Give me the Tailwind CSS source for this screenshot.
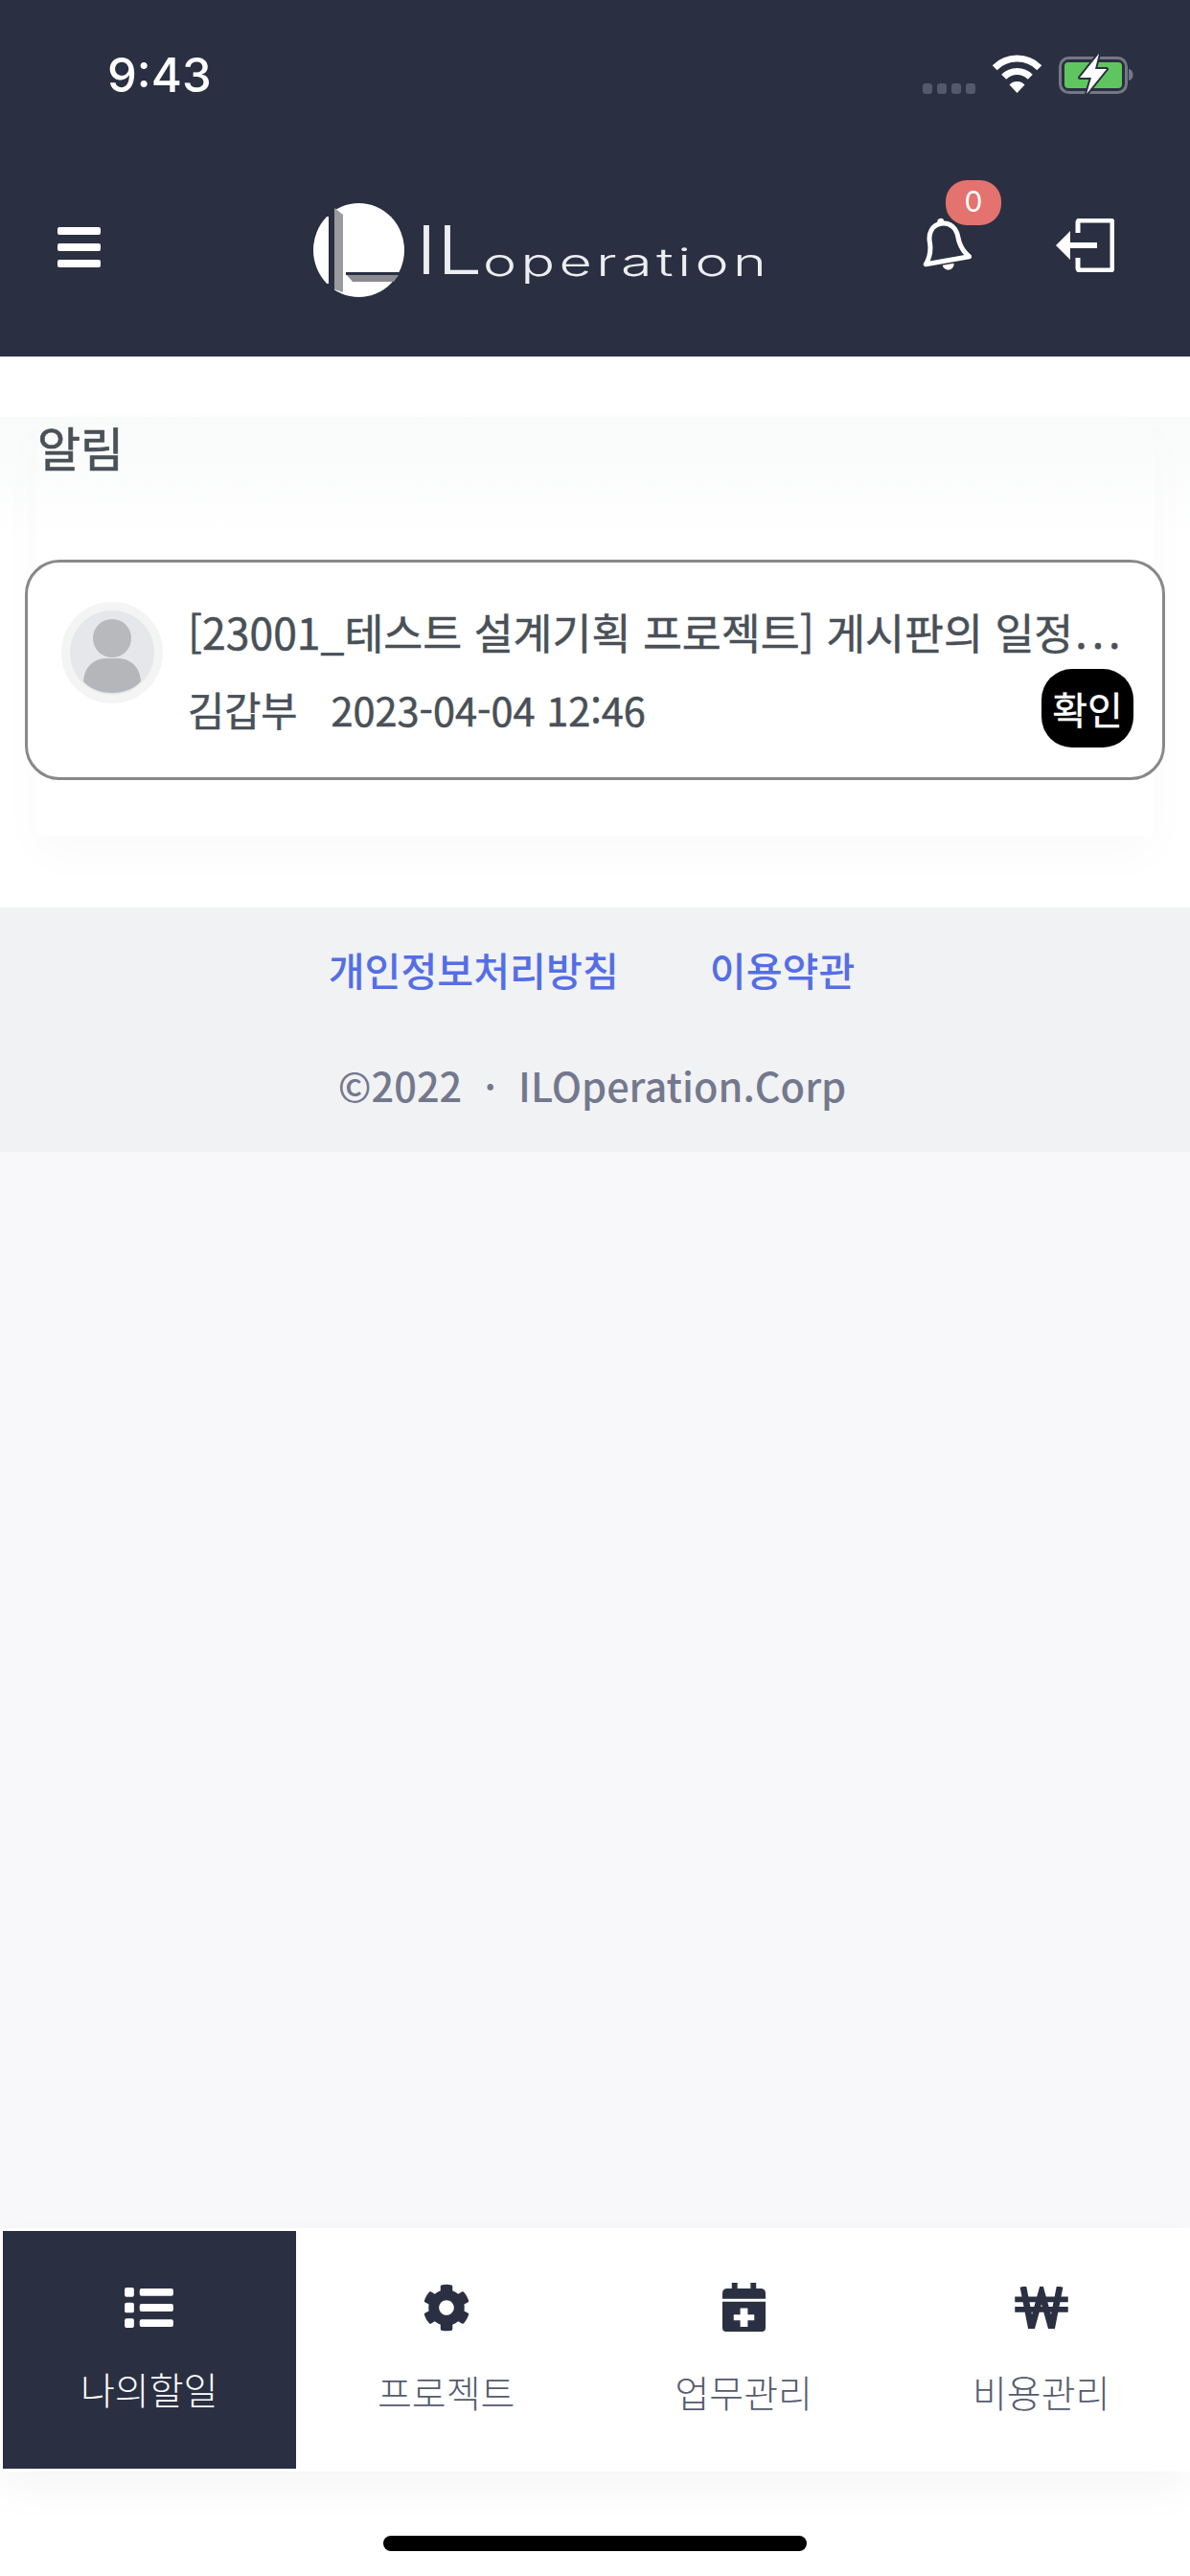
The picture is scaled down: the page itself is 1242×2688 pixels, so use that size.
<!DOCTYPE html>
<html lang="ko">
<head>
<meta charset="utf-8">
<script src="https://cdn.jsdelivr.net/npm/@tailwindcss/browser@4"></script>
<title>알림</title>
</head>
<body class="m-0">
<div class="w-[1242px] h-[2688px] flex flex-col bg-white overflow-hidden font-['Noto_Sans_CJK_KR','Noto_Sans',sans-serif]">
  <!-- header -->
  <header class="h-[372px] shrink-0 bg-[#2a3042] flex flex-col">
    <div class="h-[170px] shrink-0 flex items-start pt-[52px] pl-[112px] pr-[59px]">
      <span class="font-['Inter',sans-serif] text-[49px] leading-[54px] font-medium text-white">9:43</span>
      <div class="ml-auto flex items-start">
        <div class="flex gap-[5px] mt-[35px] mr-[17px]">
          <span class="w-[10px] h-[11px] rounded-[3px] bg-[#555a6b]"></span>
          <span class="w-[10px] h-[11px] rounded-[3px] bg-[#555a6b]"></span>
          <span class="w-[10px] h-[11px] rounded-[3px] bg-[#555a6b]"></span>
          <span class="w-[10px] h-[11px] rounded-[3px] bg-[#555a6b]"></span>
        </div>
        <svg class="w-[53px] h-[42px] mt-[4px] mr-[17px]" viewBox="0 0 53 42" fill="none">
          <path d="M3.200 14.700A33 33 0 0 1 49.800 14.700" stroke="#fff" stroke-width="7"/>
          <path d="M12.700 24.200A19.500 19.500 0 0 1 40.300 24.200" stroke="#fff" stroke-width="7"/>
          <path d="M18.500 32.500A11 11 0 0 1 34.500 32.500L26.500 41Z" fill="#fff"/>
        </svg>
        <svg class="w-[78px] h-[44px] mt-[3px]" viewBox="0 0 78 44" fill="none">
          <rect x="1.500" y="5.500" width="69" height="36" rx="9" stroke="#757884" stroke-width="3"/>
          <rect x="6" y="10" width="60" height="27" rx="4" fill="#5fc65f"/>
          <path d="M73 17c3 .5 4.500 3 4.500 6s-1.500 5.500-4.500 6Z" fill="#757884"/>
          <path d="M42 1 22 26h12l-5 17 21-26H38Z" fill="#fff" stroke="#2a3042" stroke-width="4" stroke-linejoin="round" paint-order="stroke"/>
        </svg>
      </div>
    </div>
    <div class="relative flex-1">
      <div class="absolute left-[60px] top-[67px] w-[45px] flex flex-col gap-[9px]">
        <span class="h-[8px] rounded-[2px] bg-white"></span>
        <span class="h-[8px] rounded-[2px] bg-white"></span>
        <span class="h-[8px] rounded-[2px] bg-white"></span>
      </div>
      <div class="absolute left-[327px] top-[42px] flex items-end">
        <svg class="w-[95px] h-[98px]" viewBox="0 0 95 98">
          <ellipse cx="47.500" cy="49" rx="47.500" ry="49" fill="#fff"/>
          <rect x="16" y="0" width="6" height="98" fill="#2a3042"/>
          <rect x="0" y="0" width="22" height="14" fill="#2a3042"/>
          <rect x="0" y="84" width="22" height="14" fill="#2a3042"/>
          <path d="M22 5l9 7v81l-9-3Z" fill="#9a9b9e"/>
          <path d="M34 72h57l-1 3H34Z" fill="#2a3042"/>
          <path d="M35 75h54l-5 7H41Z" fill="#8b8c90"/>
        </svg>
        <div class="ml-[12px] mb-[10px] h-[66px] w-[362px] relative text-[#eceef2] font-['Inter',sans-serif] font-light whitespace-nowrap">
          <span class="absolute left-0 bottom-[4px] origin-bottom-left scale-x-[1.2] text-[70px] leading-[70px]">IL</span>
          <span class="absolute left-[70px] bottom-[4px] origin-bottom-left scale-x-[1.48] text-[40px] leading-[44px] tracking-[3px]">operation</span>
        </div>
      </div>
      <div class="absolute left-[958px] top-[56px] w-[56px] h-[58px]">
        <svg class="w-[56px] h-[58px]" viewBox="0 0 56 58" fill="none">
          <g transform="rotate(-10 28 29)">
            <path d="M28 7c-10 0-15 8-15 17 0 9-2 15-8 22h46c-6-7-8-13-8-22 0-9-5-17-15-17Z" stroke="#fff" stroke-width="5" stroke-linejoin="round"/>
            <circle cx="28" cy="5" r="3.500" fill="#fff"/>
            <path d="M22 50a6 6 0 0 0 12 0Z" fill="#fff"/>
          </g>
        </svg>
      </div>
      <div class="absolute left-[987px] top-[18px] w-[58px] h-[47px] rounded-[22px] bg-[#e4726e] text-white text-[30px] leading-[44px] text-center font-['Inter',sans-serif]">0</div>
      <svg class="absolute left-[1102px] top-[58px] w-[61px] h-[56px]" viewBox="0 0 61 56" fill="none">
        <path d="M23 15V4a2 2 0 0 1 2-2h32a2 2 0 0 1 2 2v48a2 2 0 0 1-2 2H25a2 2 0 0 1-2-2V41" stroke="#fff" stroke-width="5" stroke-linejoin="round"/>
        <path d="M0 28 15 13v12h28v6H15v12Z" fill="#fff"/>
      </svg>
    </div>
  </header>

  <div class="h-[63px] shrink-0 bg-white"></div>

  <!-- alert section -->
  <section class="h-[512px] shrink-0 px-[38px] bg-gradient-to-b from-[#f9fafa] to-white to-[25%]">
    <div class="h-[437px] rounded-[8px] shadow-[0_20px_50px_rgba(18,38,63,0.025)]">
      <h1 class="pl-[1px] text-[49px] leading-[62px] font-normal text-[#495057] [-webkit-text-stroke:0.7px_#495057]">알림</h1>
      <div class="ml-[-12px] mt-[87px] w-[1190px] h-[230px] rounded-[36px] border-[3px] border-[#888888] bg-white flex pl-[35px] pr-[31px]">
        <div class="w-[106px] h-[106px] mt-[41px] shrink-0 rounded-full bg-[#f4f4f5] flex items-center justify-center">
          <div class="w-[88px] h-[88px] rounded-full bg-[#e6e7ea] overflow-hidden">
            <svg class="w-[88px] h-[88px]" viewBox="0 0 88 88">
              <circle cx="44" cy="29" r="20" fill="#b8b9bd"/>
              <path d="M14 74c1-16 12-24 24-24h12c12 0 23 8 24 24-7 8-18 12-30 12s-23-4-30-12Z" fill="#b5b6ba"/>
            </svg>
          </div>
        </div>
        <div class="ml-[26px] flex-1 min-w-0 flex flex-col">
          <p class="mt-[42px] h-[60px] text-[44.5px] leading-[60px] whitespace-nowrap text-[#495057] font-normal [-webkit-text-stroke:0.5px_#495057]">[23001_테스트 설계기획 프로젝트] 게시판의 일정<span class="tracking-[5px] ml-[2px]">...</span></p>
          <div class="flex items-start">
            <p class="mt-[21px] text-[41.5px] leading-[60px] text-[#495057] whitespace-pre font-normal [-webkit-text-stroke:0.5px_#495057]">김갑부   2023-04-04 12:46</p>
            <button class="ml-auto mt-[9px] mr-[-1px] w-[96px] h-[82px] rounded-[32px] bg-black text-white text-[40px] leading-[80px] font-normal text-center [-webkit-text-stroke:0.4px_#fff]">확인</button>
          </div>
        </div>
      </div>
    </div>
  </section>

  <!-- footer -->
  <footer class="h-[255px] shrink-0 bg-[#f1f2f4] flex flex-col items-center">
    <div class="mt-[35px] ml-[-7px] flex gap-[95px] text-[41.2px] leading-[58px] font-medium text-[#556ee6]">
      <a>개인정보처리방침</a>
      <a>이용약관</a>
    </div>
    <p class="mt-[63px] ml-[-6px] text-[41.5px] leading-[58px] font-medium text-[#74788d] whitespace-pre">©2022  ·  ILOperation.Corp</p>
  </footer>

  <main class="flex-1 bg-[#f8f8fb]"></main>

  <!-- bottom nav -->
  <nav class="h-[254px] shrink-0 bg-white grid grid-cols-4 shadow-[0_20px_40px_rgba(18,38,63,0.04)] relative">
    <a class="m-[3px] mr-[2px] bg-[#2a3042] flex flex-col items-center text-white">
      <svg class="w-[51px] h-[42px] mt-[59px] shrink-0" viewBox="0 0 52 43" fill="#fff">
        <rect x="0" y="0" width="10" height="10" rx="2"/><rect x="16" y="1" width="36" height="8" rx="2"/>
        <rect x="0" y="16" width="10" height="11" rx="2"/><rect x="16" y="17.500" width="36" height="8" rx="2"/>
        <rect x="0" y="33" width="10" height="10" rx="2"/><rect x="16" y="34" width="36" height="8" rx="2"/>
      </svg>
      <span class="mt-[37px] text-[39px] leading-[52px] font-light">나의할일</span>
    </a>
    <a class="flex flex-col items-center text-[#555b6e]">
      <svg class="w-[50px] h-[50px] mt-[58px] shrink-0" viewBox="0 0 512 512" fill="#2a3042"><path d="M487.400 315.700l-42.600-24.600c4.300-23.200 4.300-47 0-70.200l42.600-24.600c4.900-2.800 7.100-8.600 5.500-14-11.100-35.600-30-67.800-54.700-94.600-3.800-4.100-10-5.100-14.800-2.300L380.800 110c-17.900-15.400-38.500-27.300-60.800-35.100V25.800c0-5.600-3.900-10.500-9.400-11.700-36.700-8.200-74.300-7.800-109.200 0-5.500 1.200-9.400 6.100-9.400 11.700V75c-22.200 7.900-42.800 19.800-60.800 35.100L88.700 85.500c-4.900-2.800-11-1.900-14.800 2.300-24.700 26.700-43.600 58.900-54.700 94.600-1.700 5.400.6 11.200 5.500 14L67.300 221c-4.300 23.200-4.300 47 0 70.200l-42.600 24.600c-4.900 2.800-7.100 8.600-5.500 14 11.100 35.600 30 67.800 54.700 94.600 3.800 4.100 10 5.100 14.800 2.300l42.600-24.600c17.900 15.400 38.500 27.300 60.800 35.100v49.200c0 5.600 3.900 10.500 9.400 11.700 36.700 8.200 74.300 7.800 109.200 0 5.500-1.200 9.400-6.100 9.400-11.700v-49.200c22.200-7.900 42.800-19.800 60.800-35.100l42.600 24.600c4.900 2.800 11 1.900 14.800-2.300 24.700-26.700 43.600-58.900 54.700-94.600 1.500-5.500-.7-11.300-5.600-14.100zM256 336c-44.100 0-80-35.900-80-80s35.900-80 80-80 80 35.900 80 80-35.900 80-80 80z"/></svg>
      <span class="mt-[36px] text-[39px] leading-[52px] font-light">프로젝트</span>
    </a>
    <a class="flex flex-col items-center text-[#555b6e]">
      <svg class="w-[45px] h-[51px] mt-[57px] shrink-0" viewBox="0 0 46 52" fill="#2a3042">
        <path d="M10 0h6v6h14V0h6v6h5a5 5 0 0 1 5 5v6H0v-6a5 5 0 0 1 5-5h5Z"/>
        <path fill-rule="evenodd" d="M0 20h46v28a4 4 0 0 1-4 4H4a4 4 0 0 1-4-4Zm19 7v7h-7v6h7v7h8v-7h7v-6h-7v-7Z"/>
      </svg>
      <span class="mt-[36px] text-[39px] leading-[52px] font-light">업무관리</span>
    </a>
    <a class="flex flex-col items-center text-[#555b6e]">
      <svg class="w-[58px] h-[44px] mt-[61px] shrink-0" viewBox="0 0 58 46" fill="none" stroke="#2a3042">
        <path d="M9 0 18 46 29 6 40 46 49 0" stroke-width="7"/>
        <path d="M0 14h58M0 25h58" stroke-width="6"/>
      </svg>
      <span class="mt-[39px] text-[39px] leading-[52px] font-light">비용관리</span>
    </a>
  </nav>

  <!-- home indicator -->
  <div class="h-[109px] shrink-0 flex justify-center bg-white">
    <span class="mt-[67px] w-[442px] h-[16px] rounded-full bg-black"></span>
  </div>
</div>
</body>
</html>
